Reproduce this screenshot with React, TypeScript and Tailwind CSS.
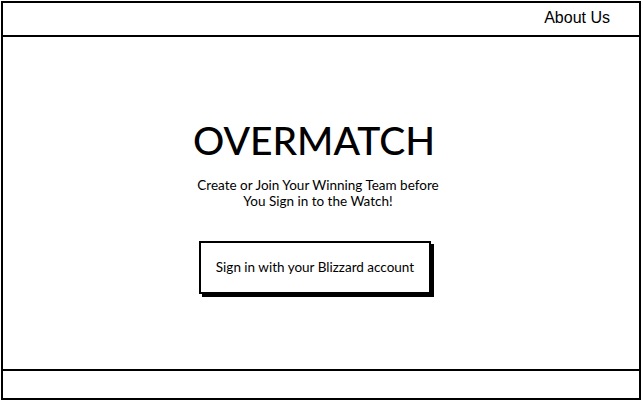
import React from "react";

export default function App() {
  return (
    <div className="w-[643px] h-[402px] bg-white p-[1px] overflow-hidden" style={{ fontFamily: "Lato, 'Liberation Sans', sans-serif" }}>
      <div className="w-[640px] h-[399px] border-2 border-black flex flex-col">
        <div className="h-[34px] border-b-2 border-black flex items-center justify-end pr-[29px] shrink-0">
          <span className="text-[16px] text-black mt-[-3px]" style={{ fontFamily: "'Liberation Sans', Arial, sans-serif" }}>About Us</span>
        </div>
        <div className="flex-1 flex flex-col items-center pt-[80px]">
          <div className="text-[39px] leading-[46px] text-black ml-[-14px]" style={{ fontWeight: 500 }}>OVERMATCH</div>
          <div className="mt-[14px] text-[13.5px] leading-[16px] text-center text-black ml-[-6px]">
            Create or Join Your Winning Team before
            <br />
            You Sign in to the Watch!
          </div>
          <div className="mt-[32px] ml-[-12px] w-[232px] h-[53px] border-2 border-black bg-white shadow-[3px_3px_0_0_#000] flex items-center justify-center text-[13.5px] text-black">
            Sign in with your Blizzard account
          </div>
        </div>
        <div className="h-[29px] border-t-2 border-black shrink-0" />
      </div>
    </div>
  );
}
